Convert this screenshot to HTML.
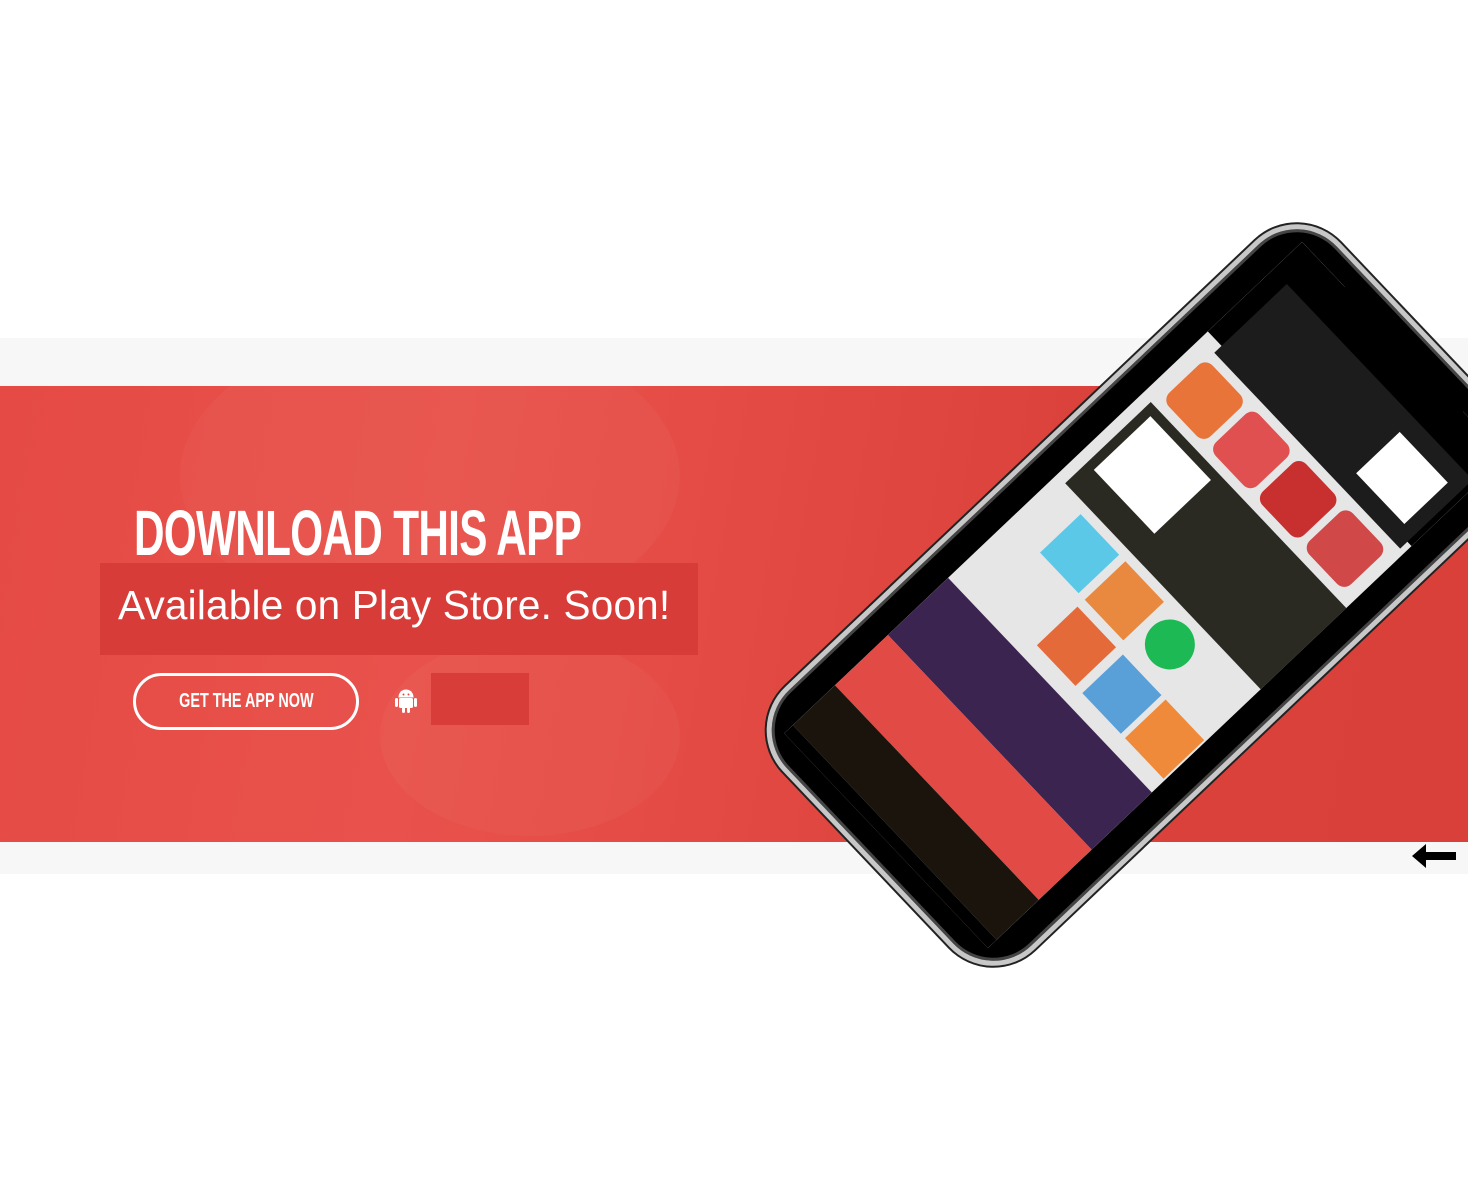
<!DOCTYPE html>
<html><head><meta charset="utf-8"><style>
*{margin:0;padding:0;box-sizing:border-box}
body{width:1468px;height:1192px;background:#fff;position:relative;overflow:hidden;font-family:"Liberation Sans",sans-serif}
.gray{position:absolute;left:0;top:338px;width:1468px;height:536px;background:#f7f7f7}
.red{position:absolute;left:0;top:386px;width:1468px;height:456px;background:linear-gradient(100deg,#e54a44 0%,#e9524c 30%,#e44a44 50%,#dc423c 70%,#d9403a 100%);overflow:hidden}
.blob{position:absolute;border-radius:50%;background:rgba(255,255,255,.03)}
.h1{position:absolute;left:134px;top:498px;color:#fff;font-family:"Liberation Sans Narrow","Liberation Sans",sans-serif;font-size:64px;font-weight:bold;letter-spacing:-1px;transform:scaleX(.66);transform-origin:left top;white-space:nowrap;line-height:70px}
.sub{position:absolute;left:100px;top:563px;width:598px;height:92px;background:#d83c38}
.sub span{position:absolute;left:18px;top:19px;color:#fff;font-size:40.5px;white-space:nowrap;letter-spacing:.2px}
.btn{position:absolute;left:133px;top:673px;width:226px;height:57px;border:3px solid #fff;border-radius:29px;color:#fff;text-align:center;line-height:51px;font-family:"Liberation Sans Narrow","Liberation Sans",sans-serif;font-size:20px;font-weight:bold}
.btn b{display:inline-block;transform:scaleX(.72)}
.dark{position:absolute;left:431px;top:673px;width:98px;height:52px;background:#d83d39}
.phone{position:absolute;left:964px;top:211px;width:362px;height:768px;transform:rotate(46.5deg);border-radius:60px;background:#000;border:5px solid #c8c8c8;box-shadow:0 0 0 2px #222,inset 0 0 0 3px #444}
.screen{position:absolute;left:28px;top:22px;right:28px;bottom:22px;background:#e6e6e6;overflow:hidden}
.notch{position:absolute;left:90px;top:14px;width:172px;height:34px;background:#000;border-radius:0 0 20px 20px}
.b{position:absolute}
.arrow{position:absolute;left:1412px;top:844px}
</style></head><body>
<div class="gray"></div>
<div class="red">
<div class="blob" style="left:180px;top:-60px;width:500px;height:300px"></div>
<div class="blob" style="left:380px;top:250px;width:300px;height:200px"></div>
</div>
<div class="h1">DOWNLOAD THIS APP</div>
<div class="sub"><span>Available on Play Store. Soon!</span></div>
<div class="btn"><b>GET THE APP NOW</b></div>
<svg style="position:absolute;left:394px;top:688px" width="24" height="26" viewBox="0 0 24 26"><path fill="#fff" d="M5 9a7 7 0 0 1 14 0z M7 3 8.5 5.5 M17 3 15.5 5.5" stroke="#fff" stroke-width="1"/><rect x="5" y="10" width="14" height="10" rx="1.5" fill="#fff"/><rect x="1" y="10" width="3" height="9" rx="1.5" fill="#fff"/><rect x="20" y="10" width="3" height="9" rx="1.5" fill="#fff"/><rect x="8" y="19" width="3" height="6" rx="1.5" fill="#fff"/><rect x="13" y="19" width="3" height="6" rx="1.5" fill="#fff"/><circle cx="9.5" cy="6.5" r="1" fill="#e54a44"/><circle cx="14.5" cy="6.5" r="1" fill="#e54a44"/></svg>
<div class="dark"></div>
<div class="phone">
 <div class="screen">
  <div class="b" style="left:0;top:0;width:100%;height:130px;background:#000"></div>
  <div class="b" style="left:20px;top:40px;width:270px;height:100px;background:#1c1c1c"></div>
  <div class="b" style="left:205px;top:60px;width:70px;height:60px;background:#fff"></div>
  <div class="b" style="left:18px;top:150px;width:60px;height:60px;background:#e8743a;border-radius:10px"></div>
  <div class="b" style="left:86px;top:150px;width:60px;height:60px;background:#e05050;border-radius:10px"></div>
  <div class="b" style="left:154px;top:150px;width:60px;height:60px;background:#c83030;border-radius:10px"></div>
  <div class="b" style="left:222px;top:150px;width:60px;height:60px;background:#d04848;border-radius:10px"></div>
  <div class="b" style="left:12px;top:220px;width:285px;height:118px;background:#2a2a22"></div>
  <div class="b" style="left:22px;top:230px;width:88px;height:78px;background:#fff"></div>
  <div class="b" style="left:45px;top:348px;width:56px;height:56px;background:#5cc8e8"></div>
  <div class="b" style="left:110px;top:348px;width:56px;height:56px;background:#e8893f"></div>
  <div class="b" style="left:176px;top:348px;width:50px;height:50px;background:#1db954;border-radius:50%"></div>
  <div class="b" style="left:110px;top:414px;width:56px;height:56px;background:#e56a3a"></div>
  <div class="b" style="left:176px;top:414px;width:56px;height:56px;background:#5aa0d8"></div>
  <div class="b" style="left:238px;top:414px;width:56px;height:56px;background:#ef8a3a"></div>
  <div class="b" style="left:0;top:488px;width:100%;height:83px;background:#3b2450"></div>
  <div class="b" style="left:0;top:571px;width:100%;height:73px;background:#e24a46"></div>
  <div class="b" style="left:0;top:644px;width:100%;height:58px;background:#1a140c"></div>
  <div class="b" style="left:0;top:702px;width:100%;height:30px;background:#000"></div>
 </div>
 <div class="notch"></div>
</div>
<svg class="arrow" width="46" height="26" viewBox="0 0 46 26"><path d="M0 12 14 0v8h30v8H14v8z" fill="#000"/></svg>
</body></html>
